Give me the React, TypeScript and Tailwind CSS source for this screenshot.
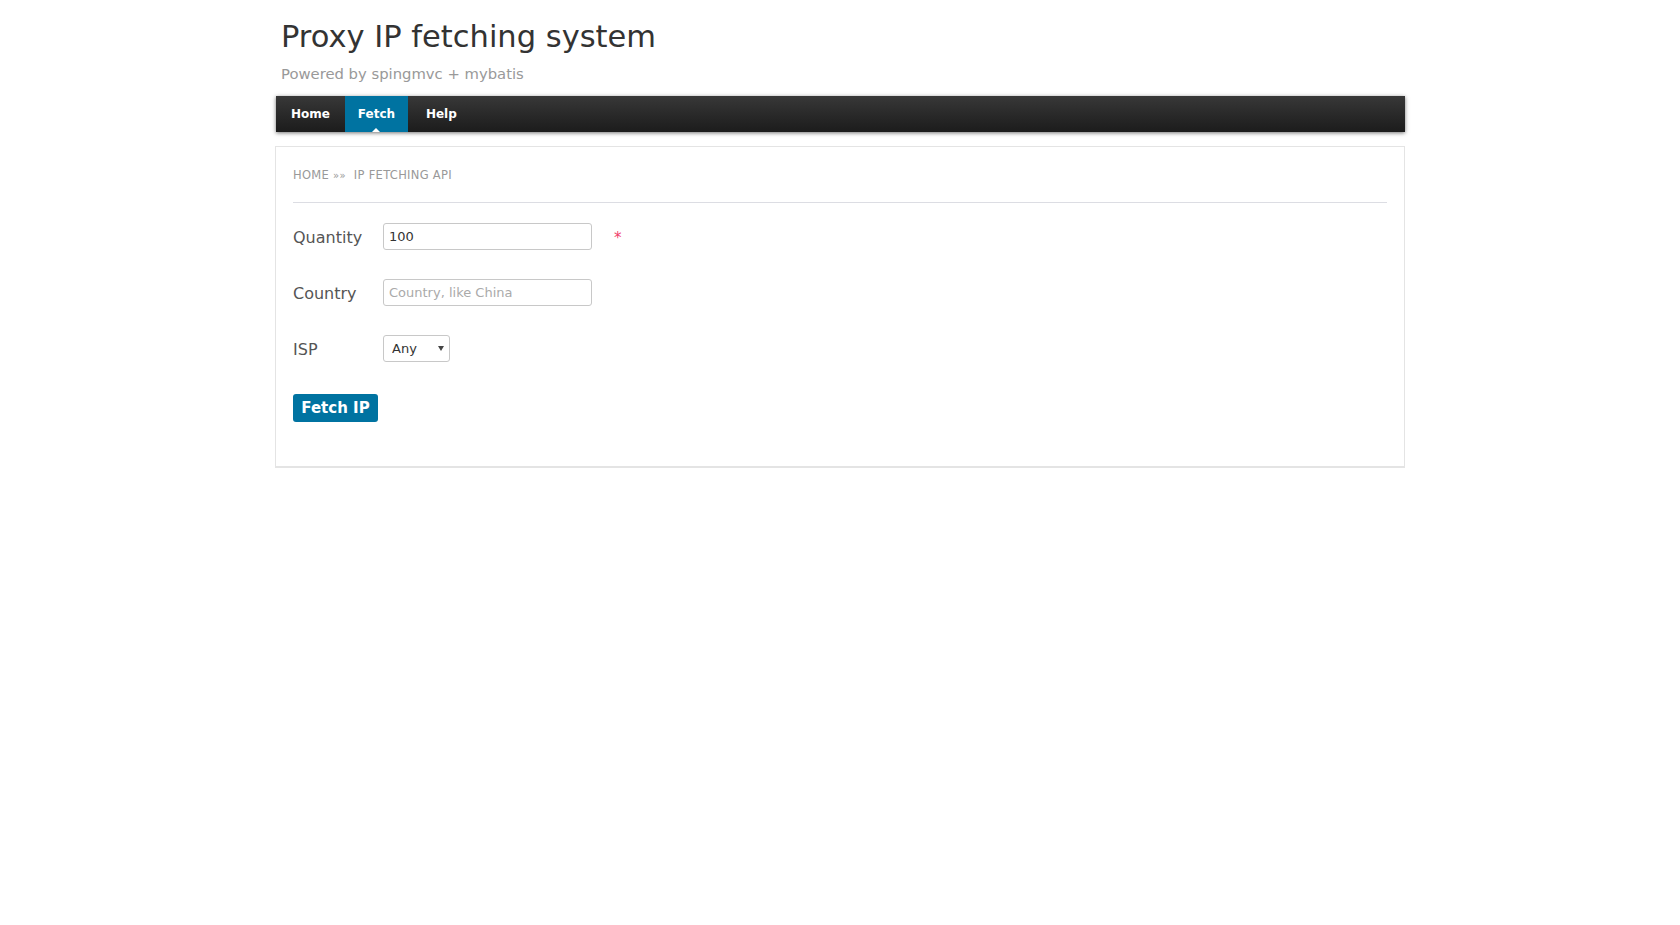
import React, { useState } from "react";

const tabs = [
  { name: "Home", cls: "px-[15px]" },
  { name: "Fetch", cls: "" },
  { name: "Help", cls: "pl-[18px] pr-[15px]" },
];

const App = () => {
  const [quantity, setQuantity] = useState<string>("100");
  const [country, setCountry] = useState<string>("");
  const [isp, setIsp] = useState<string>("any");
  const active = "Fetch";

  return (
    <div className="min-h-screen bg-white font-['DejaVu_Sans',Verdana,sans-serif]">
      <div className="mx-auto w-[1130px]">
        <header className="pl-[6px] pt-[19px]">
          <h1 className="text-[30.5px] leading-[36px] text-[#333]">Proxy IP fetching system</h1>
          <p className="mt-[9px] text-[14.8px] leading-[20px] text-[#999]">Powered by spingmvc + mybatis</p>
        </header>

        <nav className="ml-px mt-[12px] flex h-[36px] bg-linear-to-b from-[#383838] to-[#1c1c1c] shadow-[0_1px_4px_rgba(0,0,0,0.55)]">
          {tabs.map((t) => (
            <a
              key={t.name}
              className={
                t.name === active
                  ? "relative flex h-full w-[63px] cursor-pointer items-center justify-center bg-[#0073a1] text-[12px] font-bold text-white"
                  : "flex h-full cursor-pointer items-center text-[12px] font-bold text-white " + t.cls
              }
            >
              {t.name}
              {t.name === active && (
                <span className="absolute bottom-0 left-1/2 -translate-x-1/2 border-x-[4px] border-b-[4px] border-x-transparent border-b-white" />
              )}
            </a>
          ))}
        </nav>

        <div className="mt-[14px] border border-b-2 border-[#e4e4e4] px-[17px] pt-[20px] pb-[44px]">
          <div className="text-[11.5px] leading-[16px] tracking-[0.3px] text-[#999]">
            HOME <span className="text-[10px]">»»</span>&nbsp; IP FETCHING API
          </div>
          <div className="mt-[18px] border-t border-[#dcdde3]" />

          <form onSubmit={(e) => e.preventDefault()} className="mt-[20px] flex flex-col gap-[29px]">
            <div className="flex h-[27px] items-center">
              <label htmlFor="quantity" className="w-[90px] pt-[2px] text-[16px] text-[#555]">Quantity</label>
              <input
                id="quantity"
                type="text"
                value={quantity}
                onChange={(e) => setQuantity(e.target.value)}
                className="h-[27px] w-[209px] rounded-[3px] border border-[#c8c8c8] px-[5px] text-[13px] text-[#333] outline-none"
              />
              <span className="ml-[22px] pt-[4px] text-[15px] text-[#f0406a]">*</span>
            </div>

            <div className="flex h-[27px] items-center">
              <label htmlFor="country" className="w-[90px] pt-[2px] text-[16px] text-[#555]">Country</label>
              <input
                id="country"
                type="text"
                placeholder="Country, like China"
                value={country}
                onChange={(e) => setCountry(e.target.value)}
                className="h-[27px] w-[209px] rounded-[3px] border border-[#c8c8c8] px-[5px] text-[13px] text-[#333] outline-none placeholder:text-[#aaa]"
              />
            </div>

            <div className="flex h-[27px] items-center">
              <label htmlFor="isp" className="w-[90px] pt-[2px] text-[16px] text-[#555]">ISP</label>
              <div className="relative">
                <select
                  id="isp"
                  value={isp}
                  onChange={(e) => setIsp(e.target.value)}
                  className="h-[27px] w-[67px] appearance-none rounded-[3px] border border-[#c8c8c8] bg-white pl-[8px] text-[13px] text-[#333] outline-none"
                >
                  <option value="any">Any</option>
                  <option value="telecom">Telecom</option>
                  <option value="unicom">Unicom</option>
                  <option value="mobile">Mobile</option>
                </select>
                <span className="pointer-events-none absolute right-[6px] top-[11px] border-x-[3px] border-t-[5px] border-x-transparent border-t-[#444]" />
              </div>
            </div>

            <div className="mt-[3px]">
              <button
                type="submit"
                className="h-[28px] w-[85px] rounded-[3px] bg-[#0073a1] text-[15px] font-bold text-white"
              >
                Fetch IP
              </button>
            </div>
          </form>
        </div>
      </div>
    </div>
  );
};

export default App;
